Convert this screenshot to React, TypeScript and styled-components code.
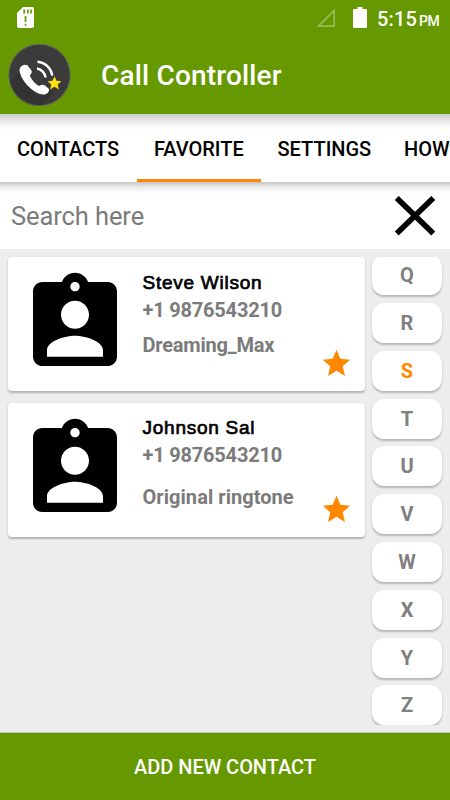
import React from "react";
import styled, { createGlobalStyle } from "styled-components";

const GREEN = "#669900";
const ORANGE = "#ff8800";

const GlobalStyle = createGlobalStyle`
  *, *::before, *::after { box-sizing: border-box; }
  html, body { margin: 0; padding: 0; overflow: hidden; }
  body { font-family: Roboto, "Liberation Sans", sans-serif; }
  svg { display: block; flex: none; }
`;

const Screen = styled.div`
  width: 450px;
  height: 800px;
  display: flex;
  flex-direction: column;
  overflow: hidden;
  background: #ededed;
`;

const StatusBar = styled.div`
  flex: none;
  height: 37px;
  padding: 0 10px 2px 17px;
  display: flex;
  align-items: center;
  background: ${GREEN};
  color: #fff;
`;

const StatusRight = styled.div`
  display: flex;
  align-items: center;
  margin-left: auto;
`;

const Clock = styled.div`
  margin-left: 10px;
  padding-top: 4px;
  width: 63px;
  font-size: 20px;
  font-weight: 500;
  line-height: 24px;
  letter-spacing: 0.15px;
  white-space: nowrap;
`;

const Meridiem = styled.span`
  margin-left: 2px;
  font-size: 14px;
  letter-spacing: -0.5px;
`;

const Header = styled.header`
  flex: none;
  height: 77px;
  padding: 0 0 1px 8px;
  display: flex;
  align-items: center;
  gap: 30px;
  background: ${GREEN};
`;

const Title = styled.h1`
  margin: 0;
  padding-top: 2px;
  color: #fff;
  font-size: 28px;
  font-weight: 500;
  line-height: 34px;
  letter-spacing: 0.17px;
`;

const Tabs = styled.nav`
  flex: none;
  width: 450px;
  height: 68px;
  display: flex;
  overflow: hidden;
  background: linear-gradient(#c9c9c9, #e6e6e6 6px, #fafafa 12px, #fff 16px);
`;

const Tab = styled.div<{ $width: number; $active?: boolean }>`
  flex: none;
  width: ${(p) => p.$width}px;
  padding: 1px 0 0 17px;
  border-bottom: 3px solid ${(p) => (p.$active ? ORANGE : "transparent")};
  line-height: 69px;
  font-size: 20px;
  font-weight: 500;
  color: #000;
  white-space: nowrap;
`;

const SearchBar = styled.div`
  flex: none;
  height: 67px;
  padding: 0 15px 0 11px;
  display: flex;
  align-items: center;
  justify-content: space-between;
  background: linear-gradient(#c4c4c4, #e6e6e6 4px, #f8f8f8 9px, #fff 12px);
`;

const SearchText = styled.div`
  color: #7b7b7b;
  font-size: 25.5px;
  line-height: 30px;
  letter-spacing: -0.1px;
`;

const Body = styled.main`
  flex: none;
  height: 483px;
  padding: 8px 4px 0 8px;
  display: flex;
  gap: 3px;
`;

const Cards = styled.div`
  width: 357px;
  display: flex;
  flex-direction: column;
  gap: 12px;
`;

const Card = styled.article`
  height: 134px;
  padding: 11px 12px 0 11px;
  display: flex;
  background: #fff;
  border-radius: 4px;
  box-shadow: 0 1.5px 2px rgba(0, 0, 0, 0.25);
`;

const Details = styled.div<{ $top: number }>`
  width: 181px;
  margin-left: 12px;
  padding-top: ${(p) => p.$top}px;
  white-space: nowrap;
`;

const Name = styled.div`
  font-family: "Liberation Sans", Arial, sans-serif;
  font-size: 19px;
  line-height: 26px;
  letter-spacing: 0.75px;
  color: #000;
  -webkit-text-stroke: 0.7px #000;
  margin-left: -0.5px;
`;

const Info = styled.div<{ $gap?: number; $spacing?: number }>`
  margin-top: ${(p) => p.$gap ?? 0}px;
  letter-spacing: ${(p) => p.$spacing ?? 0}px;
  margin-left: -0.5px;
  font-size: 20px;
  line-height: 28px;
  font-weight: 700;
  color: #7b7b7b;
`;

const StarSlot = styled.div`
  align-self: flex-end;
  margin-bottom: 11px;
  margin-left: -4px;
`;

const Letters = styled.aside`
  width: 78px;
  height: 468px;
  padding: 0 4px;
  overflow: hidden;
`;

const LetterStack = styled.div`
  display: flex;
  flex-direction: column;
  gap: 7.8px;
  margin-top: -1.8px;
`;

const Letter = styled.div<{ $active?: boolean }>`
  flex: none;
  height: 40px;
  line-height: 41px;
  text-align: center;
  border-radius: 12px;
  background: #fff;
  box-shadow: 0 1.5px 2px rgba(0, 0, 0, 0.24);
  font-size: 20px;
  font-weight: 700;
  color: ${(p) => (p.$active ? ORANGE : "#808080")};
`;

const Footer = styled.button`
  flex: none;
  height: 68px;
  padding: 2px 0 0;
  border: 0;
  border-top: 1px solid #c5c9bd;
  background: ${GREEN};
  color: #fff;
  font-family: Roboto, sans-serif;
  font-size: 20px;
  font-weight: 500;
  letter-spacing: -0.05px;
  line-height: 65px;
`;

const STAR =
  "M12 17.27 18.18 21l-1.64-7.03L22 9.24l-7.19-.61L12 2 9.19 8.63 2 9.24l5.46 4.73L5.82 21z";

const SdCardIcon = () => (
  <svg width="17" height="21" viewBox="0 0 17 21">
    <path d="M6 0h9a2 2 0 0 1 2 2v17a2 2 0 0 1-2 2H2a2 2 0 0 1-2-2V6z" fill="#fff" />
    <path d="M7.2 2.5v4M10.8 2.5v4M14 2.5v4M8.5 9v6M8.5 16.8v2" stroke={GREEN} strokeWidth="1.7" />
  </svg>
);

const SignalIcon = () => (
  <svg width="20" height="20" viewBox="0 0 20 20">
    <path d="M2.5 18.2 18.2 2.5v15.7z" fill="none" stroke="#fff" strokeOpacity=".35" strokeWidth="1.7" />
  </svg>
);

const Battery = styled.svg`
  margin-left: 17px;
`;

const BatteryIcon = () => (
  <Battery width="14" height="21" viewBox="0 0 14 21">
    <path d="M4.5 0h5v2H13a1 1 0 0 1 1 1v17a1 1 0 0 1-1 1H1a1 1 0 0 1-1-1V3a1 1 0 0 1 1-1h3.5z" fill="#fff" />
  </Battery>
);

const AppLogo = () => (
  <svg width="63" height="64" viewBox="0 0 63 64">
    <defs>
      <clipPath id="disc"><circle cx="31.5" cy="32" r="31" /></clipPath>
    </defs>
    <circle cx="31.5" cy="32" r="31" fill="#3b3b3b" />
    <path d="M12 28 0 40v24h31l15-14z" fill="#333" clipPath="url(#disc)" />
    <circle cx="31.5" cy="32" r="30.7" fill="none" stroke="#747b68" strokeWidth=".7" />
    <path
      d="M13 23.5 Q16 20.5 19.5 22.3 L23.5 27.5 Q24.500 30 21.7 32.5 Q25 39.5 31 43 Q34 40.7 37 42.5 L41 46 Q41.500 49.5 37 51.5 Q29 52.5 19 42 Q11.5 33 11.5 27 Q11.7 24.5 13 23.5Z"
      fill="#fff"
    />
    <path d="M29 25.5a10 10 0 0 1 8.500 9M29.500 18.700a16 16 0 0 1 14.700 14" fill="none" stroke="#fff" strokeWidth="2.5" />
    <path d="m46.5 33.200 2 4.600 4.900.4-3.700 3.300 1.200 4.900-4.400-2.600-4.400 2.600 1.200-4.900-3.700-3.300 4.900-.4z" fill="#ffdf10" />
  </svg>
);

const CloseIcon = () => (
  <svg width="40" height="40" viewBox="0 0 40 40">
    <path d="M1.700 2 38.300 37.500M38.300 2 1.700 37.500" stroke="#000" strokeWidth="5.700" />
  </svg>
);

const PersonBadgeIcon = () => (
  <svg width="112" height="112" viewBox="0 0 24 24">
    <path d="M19 3h-4.180C14.400 1.840 13.300 1 12 1c-1.300 0-2.400.84-2.820 2H5c-1.100 0-2 .9-2 2v14c0 1.100.9 2 2 2h14c1.100 0 2-.9 2-2V5c0-1.100-.9-2-2-2zm-7 0c.55 0 1 .45 1 1s-.45 1-1 1-1-.45-1-1 .45-1 1-1zm0 4c1.660 0 3 1.340 3 3s-1.340 3-3 3-3-1.340-3-3 1.340-3 3-3zm6 12H6v-1.400c0-2 4-3.100 6-3.100s6 1.100 6 3.100V19z" />
  </svg>
);

const FavoriteStar = () => (
  <svg width="33" height="33" viewBox="0 0 24 24">
    <path d={STAR} fill={ORANGE} />
  </svg>
);

const contacts = [
  { name: "Steve Wilson", phone: "+1 9876543210", tone: "Dreaming_Max", top: 2, gap: 7, spacing: -0.2 },
  { name: "Johnson Sal", phone: "+1 9876543210", tone: "Original ringtone", top: 1, gap: 14, spacing: 0.05 },
];

export default function App() {
  return (
    <>
      <GlobalStyle />
      <Screen>
        <StatusBar>
          <SdCardIcon />
          <StatusRight>
            <SignalIcon />
            <BatteryIcon />
            <Clock>5:15<Meridiem>PM</Meridiem></Clock>
          </StatusRight>
        </StatusBar>
        <Header>
          <AppLogo />
          <Title>Call Controller</Title>
        </Header>
        <Tabs>
          <Tab $width={137}>CONTACTS</Tab>
          <Tab $width={123.5} $active>FAVORITE</Tab>
          <Tab $width={126.5}>SETTINGS</Tab>
          <Tab $width={100}>HOW</Tab>
        </Tabs>
        <SearchBar>
          <SearchText>Search here</SearchText>
          <CloseIcon />
        </SearchBar>
        <Body>
          <Cards>
            {contacts.map((c) => (
              <Card key={c.name}>
                <PersonBadgeIcon />
                <Details $top={c.top}>
                  <Name>{c.name}</Name>
                  <Info $spacing={-0.2}>{c.phone}</Info>
                  <Info $gap={c.gap} $spacing={c.spacing}>{c.tone}</Info>
                </Details>
                <StarSlot><FavoriteStar /></StarSlot>
              </Card>
            ))}
          </Cards>
          <Letters>
            <LetterStack>
              {"QRSTUVWXYZ".split("").map((l) => (
                <Letter key={l} $active={l === "S"}>{l}</Letter>
              ))}
            </LetterStack>
          </Letters>
        </Body>
        <Footer>ADD NEW CONTACT</Footer>
      </Screen>
    </>
  );
}
